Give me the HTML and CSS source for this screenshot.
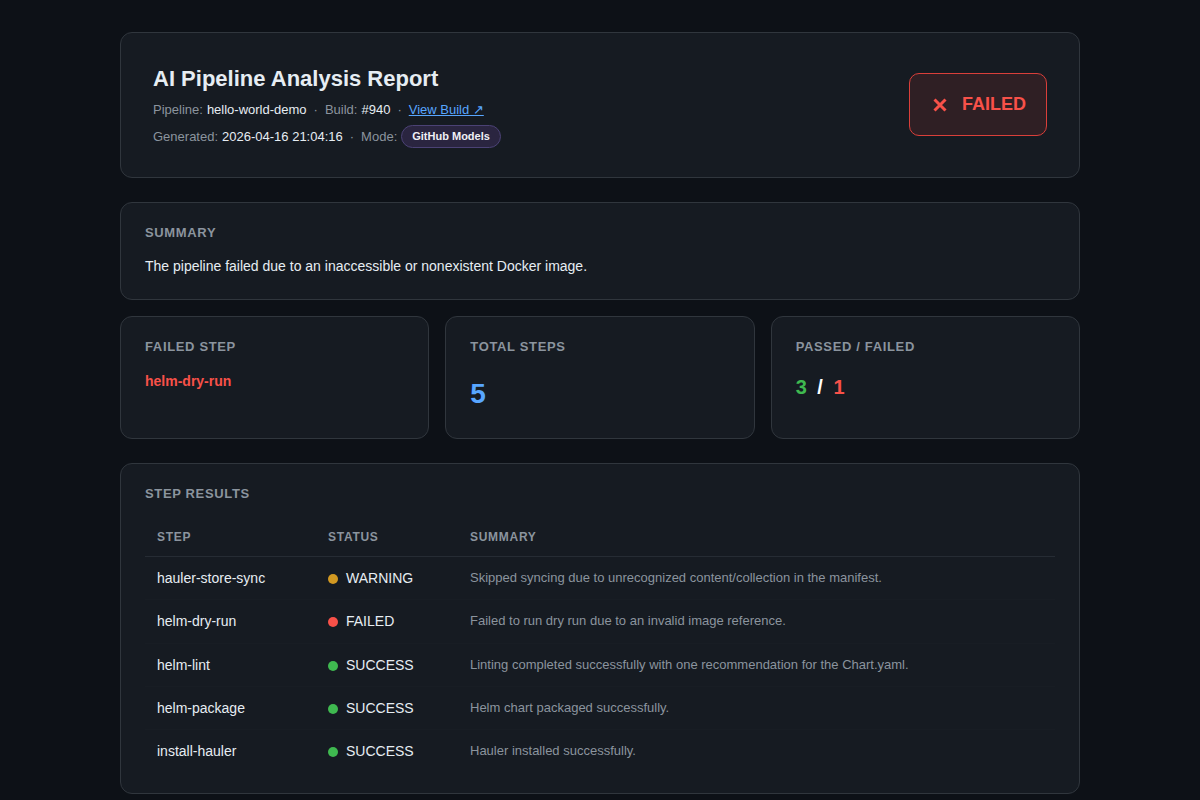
FILE: index.html
```html
<!DOCTYPE html>
<html lang="en">
<head>
<meta charset="utf-8">
<title>AI Pipeline Analysis Report</title>
<link rel="stylesheet" href="styles.css">
</head>
<body>
<main class="container">
  <section class="card header">
    <div class="header-info">
      <h1 class="title">AI Pipeline Analysis Report</h1>
      <div class="meta">
        <span class="meta-label">Pipeline:</span> <span class="meta-value">hello-world-demo</span>
        <span class="sep">·</span>
        <span class="meta-label">Build:</span> <span class="meta-value">#940</span>
        <span class="sep">·</span>
        <a class="link" href="#">View Build ↗</a>
      </div>
      <div class="meta">
        <span class="meta-label">Generated:</span> <span class="meta-value">2026-04-16 21:04:16</span>
        <span class="sep">·</span>
        <span class="meta-label">Mode:</span> <span class="pill">GitHub Models</span>
      </div>
    </div>
    <div class="status-badge">
      <svg class="x-icon" viewBox="0 0 16 16" width="16" height="16" aria-hidden="true"><path d="M2.5 2.5 L13.5 13.5 M13.5 2.5 L2.5 13.5" stroke="#f85149" stroke-width="3" stroke-linecap="butt" fill="none"/></svg>
      <span>FAILED</span>
    </div>
  </section>

  <section class="card summary">
    <h2 class="label">Summary</h2>
    <p class="summary-text">The pipeline failed due to an inaccessible or nonexistent Docker image.</p>
  </section>

  <section class="stats">
    <div class="card stat">
      <h2 class="label">Failed Step</h2>
      <div class="stat-failed">helm-dry-run</div>
    </div>
    <div class="card stat">
      <h2 class="label">Total Steps</h2>
      <div class="stat-total">5</div>
    </div>
    <div class="card stat">
      <h2 class="label">Passed / Failed</h2>
      <div class="stat-ratio"><span class="green">3</span> <span class="slash">/</span> <span class="red">1</span></div>
    </div>
  </section>

  <section class="card results">
    <h2 class="label">Step Results</h2>
    <table class="steps">
      <thead>
        <tr><th class="col-step">Step</th><th class="col-status">Status</th><th>Summary</th></tr>
      </thead>
      <tbody>
        <tr><td class="step">hauler-store-sync</td><td class="status"><span class="dot warn"></span>WARNING</td><td class="desc">Skipped syncing due to unrecognized content/collection in the manifest.</td></tr>
        <tr><td class="step">helm-dry-run</td><td class="status"><span class="dot fail"></span>FAILED</td><td class="desc">Failed to run dry run due to an invalid image reference.</td></tr>
        <tr><td class="step">helm-lint</td><td class="status"><span class="dot ok"></span>SUCCESS</td><td class="desc">Linting completed successfully with one recommendation for the Chart.yaml.</td></tr>
        <tr><td class="step">helm-package</td><td class="status"><span class="dot ok"></span>SUCCESS</td><td class="desc">Helm chart packaged successfully.</td></tr>
        <tr><td class="step">install-hauler</td><td class="status"><span class="dot ok"></span>SUCCESS</td><td class="desc">Hauler installed successfully.</td></tr>
      </tbody>
    </table>
  </section>
</main>
</body>
</html>
```

FILE: styles.css
```css
* { box-sizing: border-box; }

html, body {
  margin: 0;
  padding: 0;
  background: #0d1117;
  color: #e6edf3;
  font-family: "Liberation Sans", Arial, sans-serif;
}

.container {
  width: 960px;
  margin: 0 auto;
  padding: 32px 0 40px;
  display: flex;
  flex-direction: column;
}

.card {
  background: #161b22;
  border: 1px solid #30363d;
  border-radius: 12px;
}

.header {
  padding: 32px 32px 29px;
  display: flex;
  align-items: center;
  justify-content: space-between;
  margin-bottom: 24px;
}

.header-info {
  display: flex;
  flex-direction: column;
}

.title {
  margin: 0 0 8px;
  font-size: 22px;
  font-weight: bold;
  line-height: 27px;
  color: #e6edf3;
}

.meta {
  font-size: 13px;
  line-height: 20px;
  color: #8b949e;
  display: flex;
  align-items: center;
  gap: 4px;
}

.meta + .meta { margin-top: 5px; }

.meta-value { color: #e6edf3; }

.sep { margin: 0 3px; color: #8b949e; }

.link {
  color: #58a6ff;
  text-decoration: underline;
}

.pill {
  display: inline-block;
  font-size: 11px;
  font-weight: bold;
  color: #f0f0f5;
  background: #2a2540;
  border: 1px solid #4b4275;
  border-radius: 12px;
  padding: 5px 10px;
  line-height: 11px;
}

.status-badge {
  display: flex;
  align-items: center;
  gap: 14px;
  padding: 20px 20px 20px 22px;
  border: 1px solid #da3f3a;
  border-radius: 10px;
  color: #f85149;
  font-size: 18px;
  font-weight: bold;
  line-height: 21px;
  background: #2f1f24;
  width: 138px;
  height: 63px;
  margin-bottom: 4px;
}

.x-icon { display: block; flex: none; }

.label {
  margin: 0;
  font-size: 13px;
  font-weight: bold;
  text-transform: uppercase;
  letter-spacing: 0.05em;
  color: #8b949e;
  line-height: 16px;
}

.summary {
  padding: 22px 24px 23px;
  margin-bottom: 16px;
}

.summary-text {
  margin: 15px 0 0;
  font-size: 14px;
  line-height: 20px;
  color: #e6edf3;
}

.stats {
  display: grid;
  grid-template-columns: repeat(3, 1fr);
  gap: 16px;
  margin-bottom: 24px;
}

.stat {
  padding: 22px 24px 20px;
  height: 123px;
}

.stat-failed {
  margin-top: 17px;
  font-size: 14px;
  font-weight: bold;
  color: #f85149;
  line-height: 18px;
}

.stat-total {
  margin-top: 22px;
  font-size: 28px;
  font-weight: bold;
  color: #58a6ff;
  line-height: 34px;
}

.stat-ratio {
  margin-top: 19px;
  font-size: 20px;
  font-weight: bold;
  line-height: 26px;
}

.green { color: #3fb950; }
.red { color: #f85149; }
.slash { color: #ffffff; margin: 0 5px; }

.results {
  padding: 22px 24px 21px;
}

.steps {
  width: 100%;
  border-collapse: collapse;
  margin-top: 16px;
}

.steps th {
  text-align: left;
  font-size: 12px;
  font-weight: bold;
  text-transform: uppercase;
  letter-spacing: 0.06em;
  color: #8b949e;
  padding: 12px 12px;
  line-height: 14px;
  border-bottom: 1px solid #262c34;
}

.col-step { width: 171px; }
.col-status { width: 142px; }

.steps td {
  padding: 12px 12px;
  line-height: 18.25px;
  border-bottom: 1px solid #181d24;
  vertical-align: middle;
}

.steps tbody tr:last-child td { border-bottom: none; }

.step {
  font-size: 14px;
  color: #e6edf3;
}

.status {
  font-size: 14px;
  color: #e6edf3;
  white-space: nowrap;
}

.dot {
  display: inline-block;
  width: 10px;
  height: 10px;
  border-radius: 50%;
  margin-right: 8px;
  vertical-align: -1px;
}

.dot.warn { background: #d29922; }
.dot.fail { background: #f85149; }
.dot.ok { background: #3fb950; }

.desc {
  font-size: 13px;
  color: #8b949e;
}
```
